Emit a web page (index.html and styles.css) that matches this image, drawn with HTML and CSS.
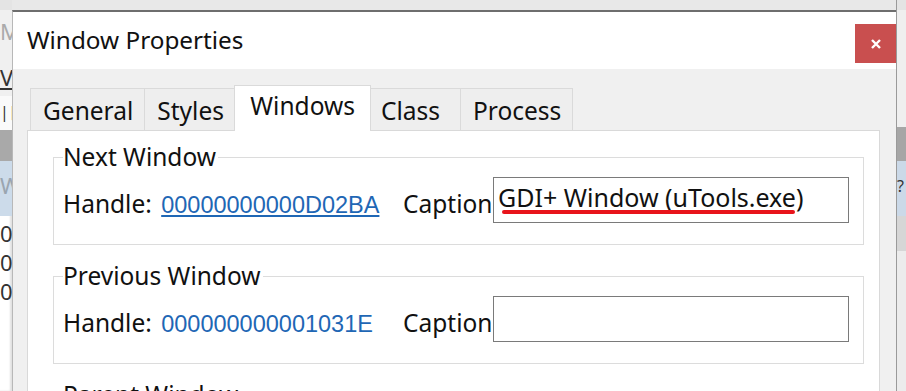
FILE: index.html
```html
<!DOCTYPE html>
<html lang="en">
<head>
  <meta charset="UTF-8">
  <title>Window Properties</title>
  <link rel="stylesheet" href="styles.css">
</head>
<body>
  <div class="screen">
    <!-- 背後のアプリ（左端） -->
    <div class="app-left">
      <div class="al-menu"><span>M</span></div>
      <div class="al-bar"><span>V</span></div>
      <div class="al-tool"><span>|</span><span>[</span></div>
      <div class="al-head"></div>
      <div class="al-sel"><span>Wi</span></div>
      <div class="al-rows">
        <p>0C</p><p>0C</p><p>0C</p>
      </div>
    </div>

    <div class="dialog">
      <div class="titlebar">
        <span class="title">Window Properties</span>
        <button class="btn-close" aria-label="Close">
          <svg width="10" height="10" viewBox="0 0 10 10"><path d="M1 1L9 9M9 1L1 9" stroke="#fff" stroke-width="2.4"/></svg>
        </button>
      </div>

      <div class="dlg-body">
        <div class="tabs">
          <div class="tab">General</div>
          <div class="tab">Styles</div>
          <div class="tab active">Windows</div>
          <div class="tab">Class</div>
          <div class="tab">Process</div>
        </div>

        <div class="panel">
          <fieldset class="group">
            <legend>Next Window</legend>
            <div class="row">
              <div class="handle">Handle: <a class="hlink hover">00000000000D02BA</a></div>
              <span class="cap-label">Caption</span>
              <div class="cap-box"><span class="marked">GDI+ Window (uTools.exe)</span></div>
            </div>
          </fieldset>

          <fieldset class="group">
            <legend>Previous Window</legend>
            <div class="row">
              <div class="handle">Handle: <a class="hlink">000000000001031E</a></div>
              <span class="cap-label">Caption</span>
              <div class="cap-box"></div>
            </div>
          </fieldset>

          <fieldset class="group">
            <legend>Parent Window</legend>
            <div class="row">
              <div class="handle">Handle: <a class="hlink">0000000000000000</a></div>
              <span class="cap-label">Caption</span>
              <div class="cap-box"></div>
            </div>
          </fieldset>
        </div>
      </div>
    </div>

    <!-- 背後のアプリ（右端） -->
    <div class="app-right">
      <div class="ar-top"></div>
      <div class="ar-head"></div>
      <div class="ar-sel"><span>?</span></div>
      <div class="ar-gap"></div>
    </div>
  </div>
</body>
</html>
```

FILE: styles.css
```css
html, body {
  margin: 0;
  height: 391px;
  overflow: hidden;
}
body {
  font-family: 'Noto Sans', 'Open Sans', sans-serif;
  background: #e8e8e8;
  color: #111;
}
.screen {
  display: flex;
  height: 391px;
}

/* 左側のアプリ */
.app-left {
  width: 12px;
  flex: none;
  background: #fff;
  overflow: hidden;
  font-size: 22px;
  color: #333;
  box-shadow: inset -2px 0 2px rgba(0,0,0,0.12);
}
.app-left p { margin: 0; line-height: 29px; }
.al-menu {
  height: 62px;
  background: #f0f0f0;
  border-top: 10px solid #e4e4e4;
  box-sizing: border-box;
  color: #aaa;
  line-height: 42px;
}
.al-bar {
  height: 34px;
  background: #f0f0f0;
  text-decoration: underline;
  line-height: 30px;
}
.al-tool {
  height: 34px;
  background: #fafafa;
  font-size: 16px;
  line-height: 32px;
  display: flex;
  gap: 2px;
}
.al-head { height: 31px; background: #a9a9a9; }
.al-sel {
  height: 55px;
  background: #ccdbea;
  color: #9aa5b0;
  line-height: 48px;
}
.al-rows { padding-top: 3px; }

/* 右側のアプリ */
.app-right {
  width: 9px;
  flex: none;
  background: #ececec;
  border-left: 1px solid #9a9a9a;
}
.ar-top { height: 127px; background: #efefef; border-top: 10px solid #e4e4e4; box-sizing: border-box; }
.ar-head { height: 34px; background: #a6a6a6; }
.ar-sel { height: 55px; background: #cbd9e8; color: #333; font-size: 16px; padding-top: 14px; box-sizing: border-box; }
.ar-gap { height: 35px; background: #d6d6d6; }

/* ダイアログ */
.dialog {
  flex: 1;
  margin-top: 10px;
  border-top: 2px solid #6e6e6e;
  border-left: 1px solid #b8b8b8;
  background: #f0f0f0;
  min-width: 0;
}
.titlebar {
  height: 57px;
  background: #fff;
  display: flex;
  align-items: flex-start;
  justify-content: space-between;
}
.title {
  font-size: 24.3px;
  margin: 12px 0 0 14px;
  line-height: 32px;
}
.btn-close {
  margin-top: 12px;
  width: 41px;
  height: 39px;
  border: none;
  background: #c94f4f;
  padding: 0;
  display: flex;
  align-items: center;
  justify-content: center;
}

.dlg-body {
  padding: 16px 16px 0 14px;
}
.tabs {
  display: flex;
  align-items: flex-end;
  padding-left: 4px;
  height: 45px;
}
.tab {
  height: 42px;
  min-width: 93px;
  box-sizing: border-box;
  padding: 0 11px 0 12px;
  font-size: 24.5px;
  line-height: 44px;
  border: 1px solid #dadada;
  border-bottom: none;
  background: #eeeeee;
  margin-left: -1px;
}
.tab.active {
  height: 46px;
  margin: 0 -2px -1px -3px;
  padding: 0 15px;
  line-height: 40px;
  background: #fff;
  position: relative;
  z-index: 1;
}
.panel {
  background: #fff;
  border: 1px solid #d9d9d9;
  padding: 11px 15px 0 25px;
  height: 300px;
}

/* グループボックス */
.group {
  margin: 0 0 16px;
  border: 1px solid #dcdcdc;
  padding: 0 14px 21px 9px;
}
.group legend {
  font-size: 24.5px;
  line-height: 30px;
  padding: 0 2px 0 0;
}
.row {
  display: grid;
  grid-template-columns: 340px 1fr 356px;
  align-items: center;
  margin-top: 5px;
  font-size: 24.5px;
}
.handle, .cap-label { padding-top: 6px; }
.hlink {
  font-family: 'Liberation Sans', Arial, sans-serif;
  font-size: 23.5px;
  color: #1f67b5;
  margin-left: 3px;
}
.hlink.hover { text-decoration: underline; }
.cap-box {
  height: 46px;
  box-sizing: border-box;
  border: 1px solid #7a7a7a;
  padding: 0 4px;
  font-size: 25px;
  line-height: 38px;
  white-space: nowrap;
}
/* 赤い下線（注釈） */
.marked {
  position: relative;
}
.marked::after {
  content: '';
  position: absolute;
  left: 4px;
  right: 8px;
  bottom: 0;
  height: 4px;
  border-radius: 2px;
  background: #e8141b;
}
```
